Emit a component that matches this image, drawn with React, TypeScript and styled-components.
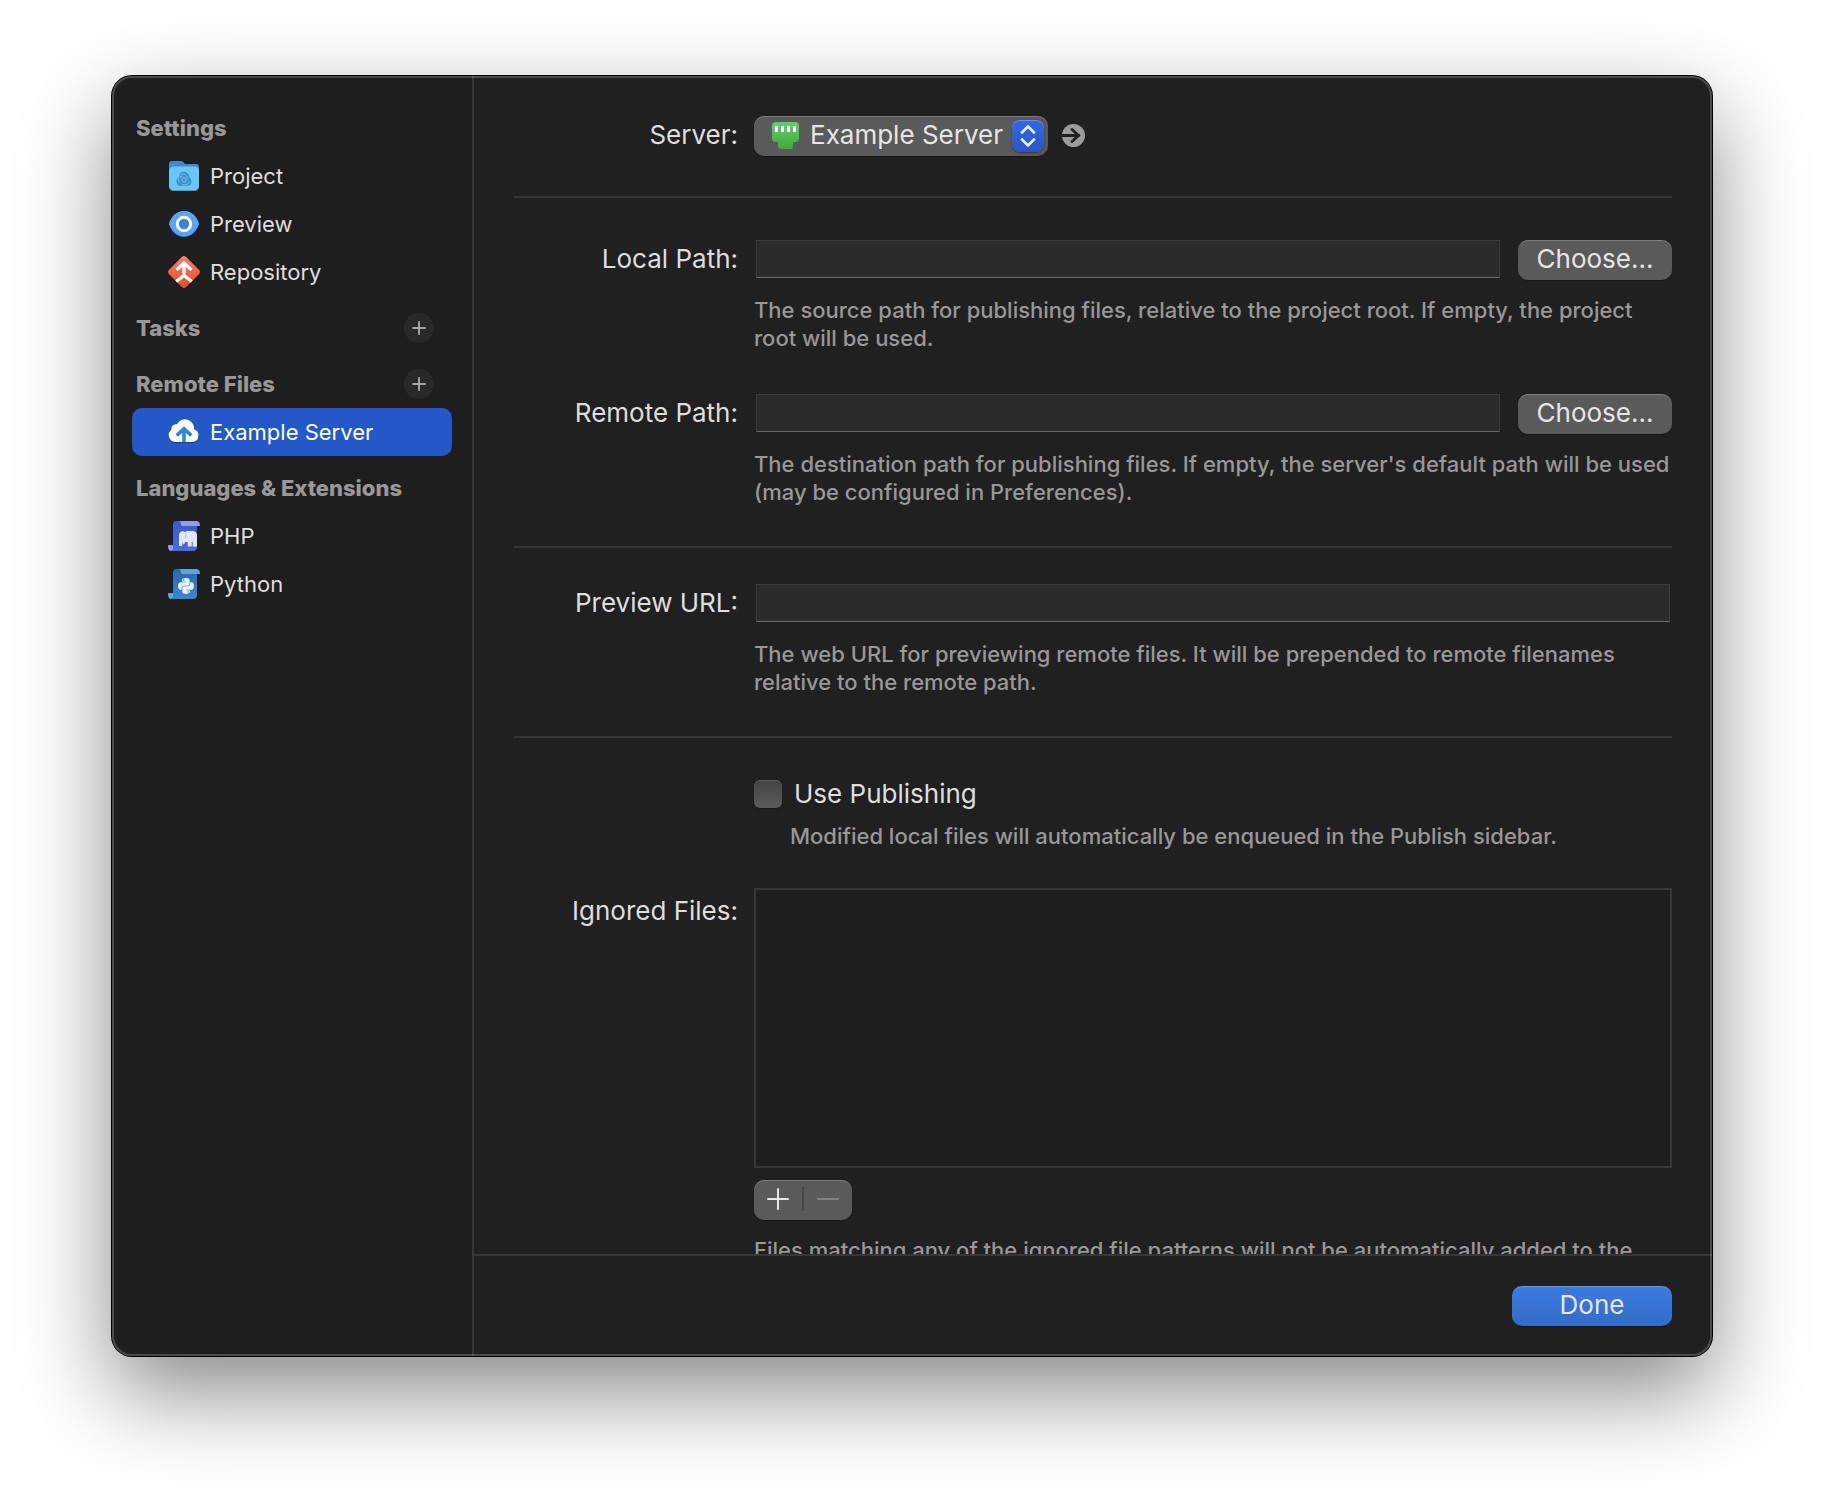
import React from 'react';
import styled, { createGlobalStyle } from 'styled-components';
import { FaPython } from 'react-icons/fa';

const GlobalStyle = createGlobalStyle`
  *, *::before, *::after { box-sizing: border-box; }
  body {
    margin: 0;
    background: #fff;
    color: #dedede;
    font-family: Inter, "Liberation Sans", sans-serif;
    -webkit-font-smoothing: antialiased;
  }
  button, input, select, textarea { font: inherit; color: inherit; margin: 0; padding: 0; border: 0; }
`;

const Desktop = styled.div`
  height: 100vh;
  min-height: 600px;
  padding: 76px 112px 148px;
  overflow: hidden;
`;

const Window = styled.div`
  position: relative;
  display: flex;
  height: 100%;
  border-radius: 20px;
  background: #202020;
  box-shadow: 0 0 0 1px #000, 0 36px 90px rgba(0, 0, 0, 0.47);

  &::after {
    content: '';
    position: absolute;
    inset: 0;
    border-radius: inherit;
    border: 2px solid rgba(255, 255, 255, 0.2);
    pointer-events: none;
  }
`;

const Sidebar = styled.nav`
  display: flex;
  flex-direction: column;
  gap: 8px;
  flex: 0 0 362px;
  padding: 28px 20px;
  border-right: 2px solid #373737;
  border-radius: 20px 0 0 20px;
  background: #1e1e1e;
`;

const SidebarHeader = styled.div`
  display: flex;
  align-items: center;
  justify-content: space-between;
  height: 48px;
  padding: 0 18px 0 4px;
`;

const SidebarTitle = styled.h2`
  margin: 0;
  color: #989898;
  font-size: 22px;
  font-weight: 800;
  line-height: 28px;
  white-space: nowrap;
`;

const AddButton = styled.button`
  display: grid;
  place-items: center;
  width: 30px;
  height: 30px;
  border-radius: 50%;
  background: #292929;
  color: #a5a5a5;
`;

const SidebarItem = styled.a<{ $selected?: boolean }>`
  display: flex;
  align-items: center;
  gap: 10px;
  height: 48px;
  padding: 0 36px;
  border-radius: 10px;
  background: ${(p) => (p.$selected ? '#2458c9' : 'transparent')};
  color: ${(p) => (p.$selected ? '#fff' : '#dedede')};
  font-size: 22px;
  line-height: 28px;
  text-decoration: none;
  white-space: nowrap;
`;

const Main = styled.main`
  display: flex;
  flex: 1;
  flex-direction: column;
  min-width: 0;
`;

const Content = styled.form`
  flex: 1;
  min-height: 0;
  padding: 40px 40px 0;
  overflow-y: auto;
  scrollbar-width: none;
`;

const Section = styled.section<{ $top?: number; $gap?: number }>`
  display: flex;
  flex-direction: column;
  gap: ${(p) => p.$gap ?? 42}px;
  padding: ${(p) => p.$top ?? 0}px 0 40px;
  & + & { border-top: 2px solid #373737; }
`;

const Row = styled.div`
  display: grid;
  grid-template-columns: 224px minmax(0, 1fr);
  column-gap: 16px;
`;

const Label = styled.label<{ $top?: number }>`
  padding-top: ${(p) => p.$top ?? 0}px;
  font-size: 26px;
  line-height: 38px;
  text-align: right;
  white-space: nowrap;
`;

const Controls = styled.div`
  display: flex;
  align-items: center;
  gap: 14px;
  height: 40px;
`;

const PathControls = styled.div`
  display: flex;
  gap: 16px;
  height: 40px;
`;

const TextField = styled.input`
  flex: 1;
  min-width: 0;
  height: 38px;
  margin: 0 2px;
  padding: 0 8px;
  border: 1px solid #3c3c3c;
  border-bottom-color: #686868;
  border-radius: 0;
  background: #2b2b2b;
  font-size: 22px;
`;

const Hint = styled.p<{ $top?: number }>`
  margin: ${(p) => p.$top ?? 16}px 0 0;
  color: #989898;
  font-size: 22px;
  font-weight: 500;
  line-height: 28px;
`;

const PushButton = styled.button<{ $primary?: boolean }>`
  width: ${(p) => (p.$primary ? 160 : 154)}px;
  height: 40px;
  padding-bottom: 2px;
  border-radius: 10px;
  background: ${(p) => (p.$primary ? 'linear-gradient(#3c7ae0, #326cc8)' : '#5a5a5a')};
  box-shadow: inset 0 1px 0 rgba(255, 255, 255, 0.22), 0 1px 1px rgba(0, 0, 0, 0.3);
  color: #e6e6e6;
  font-size: 26px;
  line-height: 38px;
`;

const Popup = styled.div`
  position: relative;
  width: 294px;
  height: 40px;
  border-radius: 10px;
  background: #5a5a5a;
  box-shadow: inset 0 1px 0 rgba(255, 255, 255, 0.22), 0 1px 1px rgba(0, 0, 0, 0.3);
`;

const PopupSelect = styled.select`
  appearance: none;
  width: 100%;
  height: 40px;
  padding: 0 40px 4px 56px;
  border-radius: 10px;
  background: transparent;
  color: #e6e6e6;
  font-size: 26px;
`;

const PopupIcon = styled.svg`
  position: absolute;
  top: 6px;
  left: 18px;
  pointer-events: none;
`;

const PopupArrows = styled.span`
  position: absolute;
  top: 4px;
  right: 4px;
  display: grid;
  place-items: center;
  width: 32px;
  height: 32px;
  border-radius: 8px;
  background: linear-gradient(#3468e0, #2858c8);
  box-shadow: inset 0 1px 0 rgba(255, 255, 255, 0.25), 0 1px 2px rgba(0, 0, 0, 0.4);
  pointer-events: none;
`;

const GoButton = styled.button`
  display: grid;
  width: 24px;
  height: 24px;
  background: none;
`;

const CheckLabel = styled.label`
  display: flex;
  align-items: center;
  gap: 12px;
  grid-column: 2;
  height: 40px;
  font-size: 26px;
  line-height: 40px;
`;

const CheckBox = styled.input`
  appearance: none;
  width: 28px;
  height: 28px;
  border-radius: 6px;
  background: linear-gradient(#444, #5c5c5c);
  box-shadow: inset 0 1px 0 rgba(255, 255, 255, 0.12), 0 1px 1px rgba(0, 0, 0, 0.3);
`;

const CheckHint = styled(Hint)`
  grid-column: 2;
  padding-left: 36px;
`;

const PatternList = styled.textarea`
  display: block;
  width: 100%;
  height: 280px;
  padding: 8px;
  border: 2px solid #373737;
  background: #1e1e1e;
  font-size: 22px;
  resize: none;
`;

const Stepper = styled.div`
  display: flex;
  align-items: center;
  width: 98px;
  height: 40px;
  margin-top: 12px;
  padding-bottom: 2px;
  border-radius: 10px;
  background: #5a5a5a;
  box-shadow: inset 0 1px 0 rgba(255, 255, 255, 0.22), 0 1px 1px rgba(0, 0, 0, 0.3);
`;

const StepButton = styled.button`
  display: grid;
  flex: 1;
  place-items: center;
  height: 24px;
  background: none;
  color: #e6e6e6;
  & + & { border-left: 2px solid #474747; }
  &:disabled { color: #838383; }
`;

const Footer = styled.footer`
  display: flex;
  justify-content: flex-end;
  height: 102px;
  padding: 30px 40px;
  border-top: 2px solid #373737;
`;

const ProjectIcon = () => (
  <svg width="32" height="32" viewBox="0 0 32 32" aria-hidden="true">
    <path d="M1 4q0-3 3-3h9q2 0 3 2l1 1h11q3 0 3 3v6H1z" fill="#3f8bc9" />
    <rect x="1" y="7" width="30" height="24" rx="4.5" fill="#4e9cc9" />
    <rect x="1" y="6.5" width="30" height="23.5" rx="4.5" fill="#68c6f8" />
    <g fill="#4290cb">
      <circle cx="16" cy="16.5" r="4.8" />
      <circle cx="13.2" cy="21.3" r="4.8" />
      <circle cx="18.8" cy="21.3" r="4.8" />
    </g>
    <g fill="none" stroke="#68c6f8" strokeWidth="1">
      <path d="M13 14.5c3-1.5 6.5 1 6 4.5M20.8 21.5c-.5 3.3-4.5 4.5-7 2M11.3 22.5c-2-3 .2-6.3 3.4-6.2" />
      <circle cx="16" cy="19.8" r="2" />
    </g>
  </svg>
);

const PreviewIcon = () => (
  <svg width="32" height="32" viewBox="0 0 32 32" aria-hidden="true">
    <path d="M1 16C3.5 8 9 3 16 3s12.500 5 15 13c-2.500 8-8 13-15 13S3.500 24 1 16z" fill="#3f7fd0" />
    <path d="M1 15.500C3.500 8 9 3 16 3s12.500 4.800 15 12.500C28.500 23 23 28 16 28S3.500 23 1 15.500z" fill="#5aa3f8" />
    <circle cx="16" cy="16" r="6.700" fill="#3a82d8" stroke="#fff" strokeWidth="3" />
  </svg>
);

const RepositoryIcon = () => (
  <svg width="32" height="32" viewBox="0 0 32 32" aria-hidden="true">
    <defs>
      <linearGradient id="repo" x1="0" y1="0" x2="0" y2="1">
        <stop offset="0" stopColor="#f5826c" />
        <stop offset="1" stopColor="#e74a28" />
      </linearGradient>
    </defs>
    <path d="M13.800 1.100q2.200-2.100 4.400 0l12.700 12.700q2.100 2.200 0 4.400L18.200 30.900q-2.200 2.100-4.400 0L1.100 18.200q-2.100-2.200 0-4.400z" fill="url(#repo)" />
    <path d="M8.500 14L16 7l7.500 7M16 8v12M8.200 25.500L16 19.500l7.800 6" fill="none" stroke="#fff" strokeWidth="3.200" />
  </svg>
);

const CloudIcon = () => (
  <svg width="32" height="32" viewBox="0 0 32 32" aria-hidden="true">
    <path d="M7.500 27.500A7 7 0 0 1 2.900 15.300 5 5 0 0 1 8.600 9.300 9.300 9.300 0 0 1 26.300 13.800 7 7 0 0 1 24.500 27.500z" fill="#1b3f86" opacity=".6" />
    <path d="M7.500 26A6.800 6.800 0 0 1 3.400 13.800 4.800 4.800 0 0 1 9 8.300 9 9 0 0 1 26 13.200 6.600 6.600 0 0 1 24.500 26z" fill="#fff" />
    <path d="M8.700 19.500L16 12.800l7.300 6.700M16 14V26" fill="none" stroke="#3485dc" strokeWidth="3.600" />
  </svg>
);

type ScrollProps = { id: string; from: string; to: string; edge: string; children: React.ReactNode };

const ScrollIcon = ({ id, from, to, edge, children }: ScrollProps) => (
  <svg width="32" height="32" viewBox="0 0 32 32" aria-hidden="true">
    <defs>
      <linearGradient id={id} x1="0" y1="0" x2="0" y2="1">
        <stop offset="0" stopColor={from} />
        <stop offset="1" stopColor={to} />
      </linearGradient>
    </defs>
    <path d="M5 4.500Q5 1 8.500 1H29v26q0 4-4 4H3q2 0 2-2z" fill={`url(#${id})`} />
    <path d="M10 1h18q4 0 4 5H14q-1 0-1-1.500Q13 1 10 1z" fill={edge} />
    <path d="M0 25h5v4q0 2-2 2-3 0-3-6z" fill={edge} />
    {children}
  </svg>
);

const PhpIcon = () => (
  <ScrollIcon id="php" from="#3b57cf" to="#4c6bdc" edge="#8f9fe6">
    <path
      d="M11 26V15.500q0-4 4-4.500l2 1 2-1h6q3.500.5 4 4V26q-1 1-4.300.5V22h-1v4.500h-4V22h-2.500q-.5 2-2 2.500l-1-3v4.500z"
      fill="#e2e7fb"
    />
    <path d="M17.300 12.500q1.500 3 .2 6" fill="none" stroke="#b9c3f2" strokeWidth="1" />
  </ScrollIcon>
);

const PythonIcon = () => (
  <ScrollIcon id="python" from="#2a68a6" to="#3a86d2" edge="#5ea3dc">
    <FaPython x="9" y="9" size={18} color="#eaf4fc" />
  </ScrollIcon>
);

const PlusGlyph = ({ size, weight }: { size: number; weight: number }) => (
  <svg width={size} height={size} viewBox={`0 0 ${size} ${size}`} aria-hidden="true">
    <path
      d={`M1 ${size / 2}H${size - 1}M${size / 2} 1V${size - 1}`}
      stroke="currentColor"
      strokeWidth={weight}
      strokeLinecap="round"
    />
  </svg>
);

const MinusGlyph = () => (
  <svg width="22" height="22" viewBox="0 0 22 22" aria-hidden="true">
    <path d="M1 11H21" stroke="currentColor" strokeWidth="2" strokeLinecap="round" />
  </svg>
);

type PathRowProps = { id: string; label: string; hint: string };

const PathRow = ({ id, label, hint }: PathRowProps) => (
  <Row>
    <Label htmlFor={id}>{label}</Label>
    <div>
      <PathControls>
        <TextField id={id} type="text" />
        <PushButton type="button">Choose...</PushButton>
      </PathControls>
      <Hint>{hint}</Hint>
    </div>
  </Row>
);

export default function App() {
  return (
    <>
      <GlobalStyle />
      <Desktop>
        <Window>
          <Sidebar>
            <div>
              <SidebarHeader>
                <SidebarTitle>Settings</SidebarTitle>
              </SidebarHeader>
              <SidebarItem href="#project"><ProjectIcon />Project</SidebarItem>
              <SidebarItem href="#preview"><PreviewIcon />Preview</SidebarItem>
              <SidebarItem href="#repository"><RepositoryIcon />Repository</SidebarItem>
            </div>
            <SidebarHeader>
              <SidebarTitle>Tasks</SidebarTitle>
              <AddButton type="button" aria-label="Add task"><PlusGlyph size={14} weight={2} /></AddButton>
            </SidebarHeader>
            <div>
              <SidebarHeader>
                <SidebarTitle>Remote Files</SidebarTitle>
                <AddButton type="button" aria-label="Add remote"><PlusGlyph size={14} weight={2} /></AddButton>
              </SidebarHeader>
              <SidebarItem href="#server" $selected aria-current="page"><CloudIcon />Example Server</SidebarItem>
            </div>
            <div>
              <SidebarHeader>
                <SidebarTitle>Languages &amp; Extensions</SidebarTitle>
              </SidebarHeader>
              <SidebarItem href="#php"><PhpIcon />PHP</SidebarItem>
              <SidebarItem href="#python"><PythonIcon />Python</SidebarItem>
            </div>
          </Sidebar>

          <Main>
            <Content>
              <Section>
                <Row>
                  <Label htmlFor="server">Server:</Label>
                  <Controls>
                    <Popup>
                      <PopupSelect id="server" defaultValue="example">
                        <option value="example">Example Server</option>
                      </PopupSelect>
                      <PopupIcon width="27" height="27" viewBox="0 0 27 27" aria-hidden="true">
                        <defs>
                          <linearGradient id="jack" x1="0" y1="0" x2="0" y2="1">
                            <stop offset="0" stopColor="#5fd068" />
                            <stop offset="1" stopColor="#43a83c" />
                          </linearGradient>
                        </defs>
                        <path d="M4 0h19q4 0 4 4v12q0 4-4 4h-2v4q0 3-3 3H9q-3 0-3-3v-4H4q-4 0-4-4V4q0-4 4-4z" fill="url(#jack)" />
                        <path d="M4.500 4v6M10.500 4v6M16.500 4v6M22.500 4v6" stroke="#fff" strokeWidth="3" />
                      </PopupIcon>
                      <PopupArrows>
                        <svg width="16" height="22" viewBox="0 0 16 22" aria-hidden="true">
                          <path d="M2 7.500L8 1.500l6 6M2 14.500l6 6 6-6" fill="none" stroke="#e4ebfa" strokeWidth="2.600" strokeLinecap="round" strokeLinejoin="round" />
                        </svg>
                      </PopupArrows>
                    </Popup>
                    <GoButton type="button" aria-label="Show server">
                      <svg width="24" height="24" viewBox="0 0 24 24" aria-hidden="true">
                        <circle cx="11.500" cy="11.500" r="11.500" fill="#9c9c9c" />
                        <path d="M0 11.500h17M10 5.500l6.500 6-6.500 6" fill="none" stroke="#202020" strokeWidth="2.800" strokeLinejoin="round" strokeLinecap="round" />
                      </svg>
                    </GoButton>
                  </Controls>
                </Row>
              </Section>

              <Section $top={42}>
                <PathRow
                  id="local-path"
                  label="Local Path:"
                  hint="The source path for publishing files, relative to the project root. If empty, the project root will be used."
                />
                <PathRow
                  id="remote-path"
                  label="Remote Path:"
                  hint="The destination path for publishing files. If empty, the server's default path will be used (may be configured in Preferences)."
                />
              </Section>

              <Section $top={36}>
                <Row>
                  <Label htmlFor="preview-url">Preview URL:</Label>
                  <div>
                    <PathControls>
                      <TextField id="preview-url" type="text" />
                    </PathControls>
                    <Hint>The web URL for previewing remote files. It will be prepended to remote filenames relative to the remote path.</Hint>
                  </div>
                </Row>
              </Section>

              <Section $top={36} $gap={38}>
                <Row>
                  <CheckLabel>
                    <CheckBox type="checkbox" />
                    Use Publishing
                  </CheckLabel>
                  <CheckHint $top={8}>Modified local files will automatically be enqueued in the Publish sidebar.</CheckHint>
                </Row>
                <Row>
                  <Label htmlFor="ignored" $top={4}>Ignored Files:</Label>
                  <div>
                    <PatternList id="ignored" />
                    <Stepper>
                      <StepButton type="button" aria-label="Add pattern"><PlusGlyph size={22} weight={2} /></StepButton>
                      <StepButton type="button" aria-label="Remove pattern" disabled><MinusGlyph /></StepButton>
                    </Stepper>
                    <Hint>Files matching any of the ignored file patterns will not be automatically added to the</Hint>
                  </div>
                </Row>
              </Section>
            </Content>
            <Footer>
              <PushButton type="button" $primary>Done</PushButton>
            </Footer>
          </Main>
        </Window>
      </Desktop>
    </>
  );
}
